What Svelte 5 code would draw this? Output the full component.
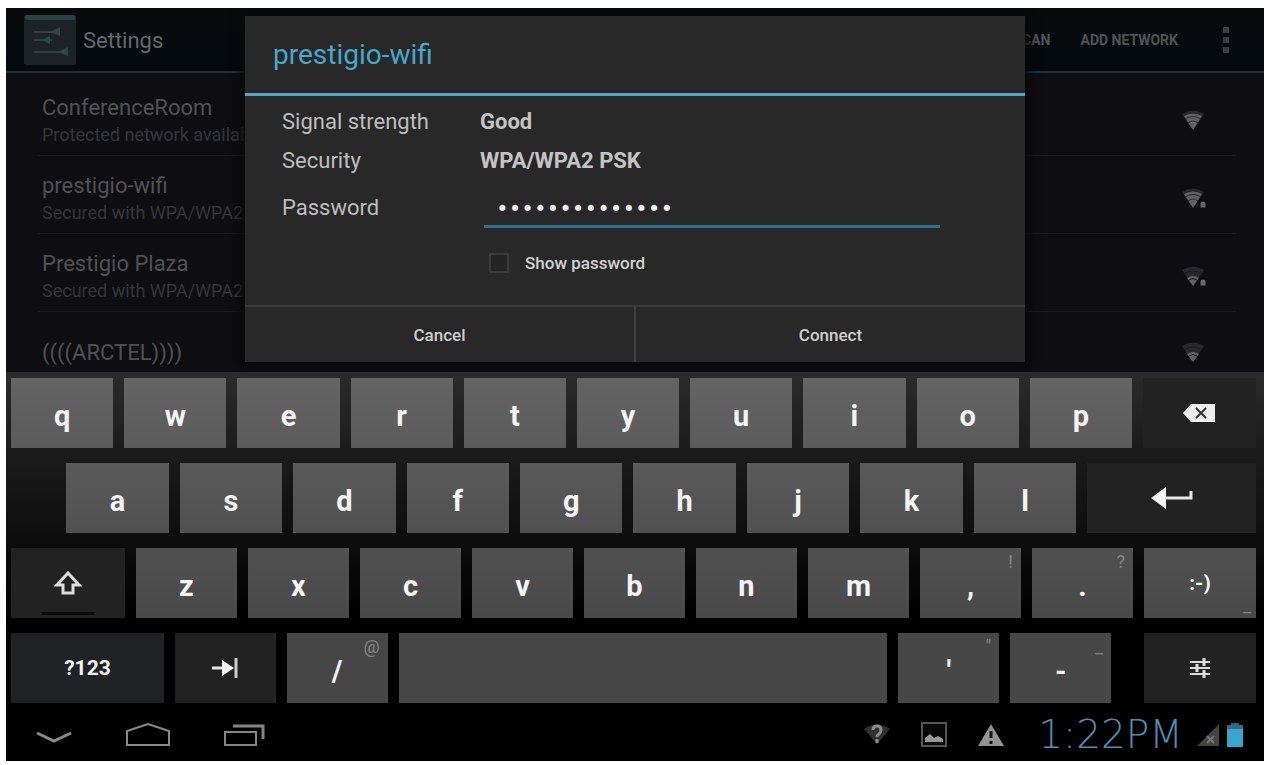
<script lang="ts">
  type Key = {
    label?: string;
    icon?: string;
    name?: string;
    hint?: string;
    size?: number;
    tone?: 'dark' | 'blue';
    spacer?: boolean;
  };

  const networks = [
    { name: 'ConferenceRoom', detail: 'Protected network available', strength: 3, locked: false },
    { name: 'prestigio-wifi', detail: 'Secured with WPA/WPA2', strength: 3, locked: true },
    { name: 'Prestigio Plaza', detail: 'Secured with WPA/WPA2', strength: 2, locked: true },
    { name: '((((ARCTEL))))', detail: '', strength: 2, locked: false },
  ];

  const letters = (text: string, size: number): Key[] =>
    text.split('').map((label) => ({ label, size }));

  const rows: Key[][] = [
    [...letters('qwertyuiop', 102), { icon: 'delete', name: 'Delete', size: 113, tone: 'dark' }],
    [
      { spacer: true, size: 44 },
      ...letters('asdfghjkl', 102),
      { icon: 'enter', name: 'Enter', size: 168, tone: 'dark' },
    ],
    [
      { icon: 'shift', name: 'Shift', size: 114, tone: 'dark' },
      ...letters('zxcvbnm', 101),
      { label: ',', hint: '!', size: 101 },
      { label: '.', hint: '?', size: 101 },
      { label: ':-)', hint: '_', size: 112 },
    ],
    [
      { label: '?123', size: 153, tone: 'blue' },
      { icon: 'tab', name: 'Tab', size: 101, tone: 'dark' },
      { label: '/', hint: '@', size: 101 },
      { name: 'Space', size: 489 },
      { label: "'", hint: '"', size: 101 },
      { label: '-', hint: '_', size: 101 },
      { spacer: true, size: 11 },
      { icon: 'options', name: 'Keyboard options', size: 112, tone: 'dark' },
    ],
  ];

  let password = $state('prestigio12345');
  let showPassword = $state(false);
</script>

<div class="device">
  <div class="screen">
    <header class="action-bar">
      <svg class="app-icon" width="52" height="50" viewBox="0 0 52 50">
        <rect width="52" height="50" rx="2" fill="#1b2327" />
        <rect x="1" width="50" height="5" rx="2" fill="#2b4147" />
        <g stroke="#303d42" stroke-width="2">
          <path d="M10 17h25M10 25h18M10 37h34" />
        </g>
        <g fill="#324549">
          <path d="M26 17l10-5v9zM18 25l8-4v8zM34 37l10-5v9z" />
        </g>
      </svg>
      <h1>Settings</h1>
      <nav class="actions">
        <button>SCAN</button>
        <button>ADD NETWORK</button>
        <button class="more" aria-label="More options">
          <svg width="8" height="28" viewBox="0 0 8 28" fill="#3a3d40">
            <rect x="1" y="1" width="6" height="6" />
            <rect x="1" y="11" width="6" height="6" />
            <rect x="1" y="21" width="6" height="6" />
          </svg>
        </button>
      </nav>
    </header>

    <ul class="networks">
      {#each networks as network}
        <li>
          <div class="network-text">
            <span class="network-name">{network.name}</span>
            {#if network.detail}
              <span class="network-detail">{network.detail}</span>
            {/if}
          </div>
          <svg width="28" height="22" viewBox="0 0 28 22">
            <path d="M2 4Q13-3 24 4L13 20z" fill="#29292c" />
            {#if network.strength === 3}
              <path d="M4 6Q13 1 22 6L13 20z" fill="#616164" />
              <path d="M5 9Q13 4 21 9M8 13Q13 9 18 13" fill="none" stroke="#2c2c2f" />
            {:else}
              <path d="M7 12Q13 8 19 12L13 20z" fill="#616164" />
              <path d="M4 8Q13 2 22 8M9 14Q13 11 17 14" fill="none" stroke="#1a1a1d" />
            {/if}
            {#if network.locked}
              <path d="M20 15q3-4 6 0v5h-6z" fill="#66666a" stroke="#101014" />
            {/if}
          </svg>
        </li>
      {/each}
    </ul>

    <div class="backdrop">
      <form class="dialog" onsubmit={(e) => e.preventDefault()}>
        <h2>prestigio-wifi</h2>
        <div class="fields">
          <span>Signal strength</span>
          <strong>Good</strong>
          <span>Security</span>
          <strong>WPA/WPA2 PSK</strong>
          <label class="password-label" for="password">Password</label>
          <input
            id="password"
            class="password"
            type={showPassword ? 'text' : 'password'}
            bind:value={password}
          />
          <label class="show-password">
            <input type="checkbox" bind:checked={showPassword} />
            Show password
          </label>
        </div>
        <div class="buttons">
          <button type="button">Cancel</button>
          <button type="submit">Connect</button>
        </div>
      </form>
    </div>
  </div>

  <div class="keyboard">
    {#each rows as row, i}
      <div class="row row-{i + 1}">
        {#each row as key}
          {#if key.spacer}
            <span style="flex-grow: {key.size}"></span>
          {:else}
            <button
              class="key {key.tone ?? ''}"
              class:letter={key.label?.length === 1}
              style="flex-grow: {key.size}"
              aria-label={key.name}
            >
              {#if key.icon === 'delete'}
                <svg width="34" height="20" viewBox="0 0 34 20">
                  <path d="M1 10L9 1H33V19H9z" fill="#eee" />
                  <path d="M14 5l10 10M24 5L14 15" stroke="#333" stroke-width="2" />
                </svg>
              {:else if key.icon === 'enter'}
                <svg width="42" height="22" viewBox="0 0 42 22">
                  <path d="M0 11L15 0V22z" fill="#f2f2f2" />
                  <path d="M14 11H40V4" fill="none" stroke="#e6e6e6" stroke-width="3" />
                </svg>
              {:else if key.icon === 'shift'}
                <svg width="28" height="24" viewBox="0 0 28 24">
                  <path
                    d="M14 2L25 14H19V22H9V14H3z"
                    fill="none"
                    stroke="#ddd"
                    stroke-width="3"
                  />
                </svg>
                <i class="shift-lock"></i>
              {:else if key.icon === 'tab'}
                <svg width="26" height="20" viewBox="0 0 26 20">
                  <path d="M0 10H12" stroke="#e6e6e6" stroke-width="3" />
                  <path d="M10 2L22 10L10 18z" fill="#f2f2f2" />
                  <path d="M24 0V20" stroke="#ccc" stroke-width="3" />
                </svg>
              {:else if key.icon === 'options'}
                <svg width="20" height="20" viewBox="0 0 20 20" stroke="#ddd">
                  <path d="M0 4H20M0 10H20M0 16H20" stroke-width="2" />
                  <path d="M14 0V8M7 6V14M14 12V20" stroke-width="3" />
                </svg>
              {:else}
                {key.label ?? ''}
              {/if}
              {#if key.hint}
                <span class="hint" class:low={key.label === ':-)'}>{key.hint}</span>
              {/if}
            </button>
          {/if}
        {/each}
      </div>
    {/each}
  </div>

  <footer class="system-bar">
    <button aria-label="Hide keyboard">
      <svg width="38" height="28" viewBox="0 0 38 28">
        <path d="M2 12L19 20L36 12" fill="none" stroke="#8a8a8a" stroke-width="3" />
      </svg>
    </button>
    <button aria-label="Home">
      <svg width="46" height="28" viewBox="0 0 46 28">
        <path d="M2 24V10L23 3L44 10V24z" fill="none" stroke="#8a8a8a" stroke-width="2" />
      </svg>
    </button>
    <button aria-label="Recent apps">
      <svg width="44" height="28" viewBox="0 0 44 28" fill="none" stroke="#858585">
        <rect x="2" y="11" width="31" height="13" stroke-width="2" />
        <path d="M10 5H40V18" stroke-width="3" />
      </svg>
    </button>
    <div class="status">
      <svg width="28" height="26" viewBox="0 0 28 26">
        <path d="M1 7Q14-2 27 7L14 22z" fill="#303030" />
        <path
          d="M10 8q0-4 4-4t4 4q0 2-2 4q-2 1-2 3M14 17v4"
          fill="none"
          stroke="#8c8c8c"
          stroke-width="3"
        />
      </svg>
      <svg width="28" height="26" viewBox="0 0 28 26">
        <rect x="2" y="1" width="24" height="23" fill="#080808" stroke="#555" stroke-width="2" />
        <path d="M5 20v-4l5-4 4 4 4-2 5 3v3z" fill="#999" />
      </svg>
      <svg width="28" height="26" viewBox="0 0 28 26">
        <path d="M14 2L27 24H1z" fill="#929292" />
        <path d="M14 9v7M14 19v3" stroke="#111" stroke-width="3" />
      </svg>
      <time>1:22PM</time>
      <div class="meters">
        <svg width="24" height="24" viewBox="0 0 24 24">
          <path d="M1 23L23 1V23z" fill="#45453f" />
          <path d="M11 13l7 7M18 13l-7 7" stroke="#77776f" stroke-width="2" />
        </svg>
        <svg width="18" height="24" viewBox="0 0 18 24">
          <rect x="5" y="0" width="8" height="3" fill="#23647f" />
          <rect x="1" y="2" width="16" height="22" rx="1" fill="#3ba4cc" />
          <rect x="1" y="2" width="16" height="4" fill="#2a6e8b" />
        </svg>
      </div>
    </div>
  </footer>
</div>

<style>
  :global(body) {
    background: #fff;
  }
  .device {
    display: flex;
    flex-direction: column;
    height: calc(100vh - 12px);
    margin: 8px 4px 4px 6px;
    overflow: hidden;
    background: #000;
    color: #bebebe;
    font-family: Roboto, 'Liberation Sans', sans-serif;
  }
  button {
    padding: 0;
    border: 0;
    background: none;
    color: inherit;
    font-family: inherit;
  }
  svg {
    display: block;
  }
  .screen {
    position: relative;
    flex: 1;
    min-height: 0;
    overflow: hidden;
    background: #0d0d12;
  }
  .action-bar {
    display: flex;
    align-items: center;
    height: 63px;
    padding: 0 34px 0 18px;
    border-bottom: 2px solid #1b313b;
    background: linear-gradient(#070b0d, #04090e);
    color: #64686b;
  }
  h1 {
    margin: 0 0 0 7px;
    padding-top: 2px;
    font-size: 22px;
    font-weight: 400;
  }
  .actions {
    display: flex;
    align-items: center;
    gap: 30px;
    margin-left: auto;
    color: #505356;
  }
  .actions button {
    font-size: 14px;
    font-weight: 700;
  }
  .actions .more {
    margin-left: 14px;
  }
  .networks {
    margin: 0;
    padding: 5px 28px 0 32px;
    list-style: none;
  }
  .networks li {
    display: flex;
    align-items: center;
    justify-content: space-between;
    box-sizing: border-box;
    height: 78px;
    padding: 9px 28px 0 4px;
    border-bottom: 1px solid #1a1a1f;
  }
  .networks li:last-child {
    padding-top: 4px;
  }
  .network-text {
    display: flex;
    flex-direction: column;
  }
  .network-name {
    color: #515155;
    font-size: 22px;
    line-height: 28px;
  }
  .network-detail {
    color: #353539;
    font-size: 18px;
    line-height: 26px;
  }

  .backdrop {
    position: absolute;
    inset: 0;
    display: flex;
    align-items: flex-start;
    justify-content: center;
    padding-top: 8px;
  }
  .dialog {
    width: 62%;
    background: #282828;
    box-shadow: 0 0 8px 4px #090909;
  }
  h2 {
    margin: 0;
    padding: 0 28px;
    border-bottom: 3px solid #4da9cf;
    color: #45a8cc;
    font-size: 28px;
    font-weight: 400;
    line-height: 77px;
  }
  .fields {
    display: grid;
    grid-template-columns: 198px 1fr;
    grid-template-rows: 39px 39px 48px 77px;
    padding: 6px 85px 0 37px;
    font-size: 22px;
    line-height: 39px;
  }
  strong {
    color: #c4c4c4;
  }
  .password-label {
    padding-top: 8px;
  }
  .password {
    box-sizing: border-box;
    min-width: 0;
    height: 42px;
    margin: 6px 0 0 4px;
    padding: 6px 12px 0;
    border: 0;
    border-bottom: 3px solid #27728c;
    outline: 0;
    background: none;
    color: #f2f2f2;
    font-family: 'DejaVu Sans Mono', monospace;
    font-size: 21px;
  }
  .show-password {
    grid-column: 2;
    display: flex;
    align-items: center;
    gap: 16px;
    height: 70px;
    margin-left: 9px;
    color: #d2d2d2;
    font-size: 17px;
    font-weight: 500;
  }
  .show-password input {
    appearance: none;
    width: 20px;
    height: 20px;
    margin: 0;
    border: 2px solid #3b3b3b;
    background: #242424;
  }
  .show-password input:checked {
    background: #45a8cc;
  }
  .buttons {
    display: flex;
    border-top: 2px solid #3b3b3b;
  }
  .buttons button {
    flex: 1;
    height: 55px;
    color: #cfcfcf;
    font-size: 17px;
    font-weight: 500;
  }
  .buttons button + button {
    border-left: 2px solid #3f3f3f;
  }

  .keyboard {
    display: flex;
    flex-direction: column;
    gap: 15px;
    padding: 6px 8px 6px 5px;
    background: linear-gradient(#2b2b2b, #1b1b1b 24%, #0d0d0d 50%, #000 75%);
  }
  .row {
    display: flex;
    gap: 11px;
    height: 70px;
  }
  .row > * {
    flex-basis: 0;
    min-width: 0;
  }
  .key {
    position: relative;
    display: flex;
    align-items: center;
    justify-content: center;
    color: #f4f4f4;
    font-size: 21px;
    font-weight: 700;
  }
  .key.letter {
    padding-top: 5px;
    font-size: 29px;
  }
  .row-1 .key {
    background: linear-gradient(#646464, #5b5b5b);
  }
  .row-2 .key {
    background: linear-gradient(#5a5a5a, #505050);
  }
  .row-3 .key {
    background: linear-gradient(#515151, #494949);
  }
  .row-4 .key {
    background: #474747;
  }
  .row .key.dark {
    background: #222;
  }
  .row .key.blue {
    background: #1f2326;
  }
  .hint {
    position: absolute;
    top: 4px;
    right: 8px;
    color: #858585;
    font-size: 18px;
    font-weight: 400;
    line-height: 20px;
  }
  .hint.low {
    top: auto;
    right: 5px;
    bottom: 2px;
  }
  .shift-lock {
    position: absolute;
    bottom: 3px;
    width: 52px;
    height: 3px;
    background: #0c0c0c;
  }

  .system-bar {
    display: flex;
    align-items: center;
    gap: 52px;
    height: 52px;
    padding: 0 20px 0 29px;
  }
  .status {
    display: flex;
    align-items: center;
    gap: 29px;
    margin-left: auto;
  }
  time {
    padding-left: 4px;
    color: #4e8fb0;
    font-family: 'DejaVu Sans', sans-serif;
    font-size: 39px;
    font-weight: 200;
    line-height: 40px;
  }
  .meters {
    display: flex;
    gap: 6px;
    margin-left: -16px;
  }
</style>
